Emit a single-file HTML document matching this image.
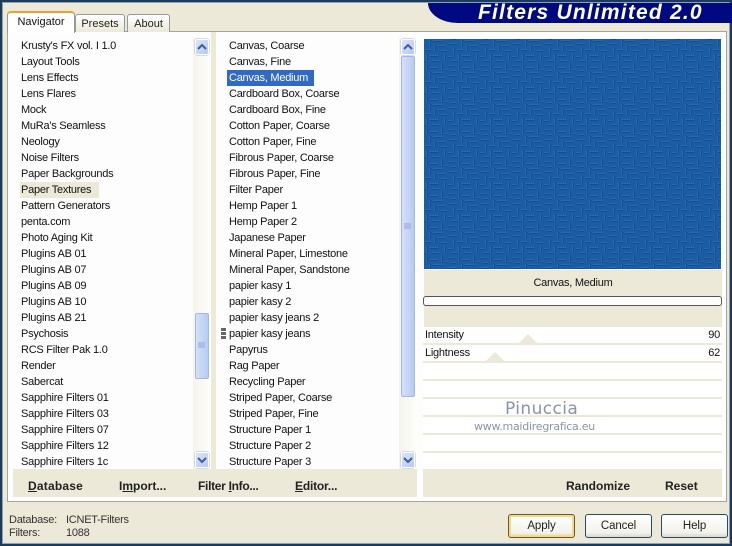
<!DOCTYPE html>
<html><head><meta charset="utf-8"><style>
html,body{margin:0;padding:0;background:#ece9d8}
#w{position:relative;width:732px;height:546px;overflow:hidden;background:#ece9d8;font:11px "Liberation Sans",sans-serif;color:#000}
#w div{position:absolute;box-sizing:border-box}
.r{height:16px;line-height:16px;white-space:nowrap;letter-spacing:-.25px;font-size:11px;color:#111}
.b{font:bold 12px/16px "Liberation Sans",sans-serif;white-space:nowrap;height:16px;color:#222}
.row{left:423px;width:299px;height:16px;background:#fff}
.sep{left:423px;width:299px;height:2px;background:#ece9d8}
.btn{height:24px;width:67px;border:1px solid #2a4a68;border-radius:3px;background:linear-gradient(#fff,#f3f2ea 80%,#dcd8c8);text-align:center;line-height:22px;color:#222;font-size:11.5px;letter-spacing:-.1px}
.sb{width:18px;background:linear-gradient(90deg,#f4f3ec,#fefefb)}
.arr{width:14px;height:16px;background:linear-gradient(135deg,#dbe5f8,#b5c9ef);border:1px solid #fff;border-radius:2px;box-shadow:0 0 0 .5px #a8bce0}
.th{width:14px;background:linear-gradient(90deg,#d5e0f8,#b7cbf2);border:1px solid #a4b8e0;border-radius:2px}
.tab{background:linear-gradient(#fff,#ece9d8);border:1px solid #919b9c;border-bottom:0;border-radius:3px 3px 0 0;text-align:center;color:#222}
.tri{width:0;height:0;border-left:9px solid transparent;border-right:9px solid transparent;border-bottom:9px solid #ece9d8}
</style></head><body><div id="w">
<div style="left:0;top:0;width:732px;height:546px;border:2px solid #1c3a5c;outline:1px solid #8fa0b0;outline-offset:-3px"></div>

<div style="left:428px;top:3px;width:304px;height:20px;background:#000a80;border-radius:0 0 0 30px/0 0 0 20px"></div>
<div style="left:478px;top:2px;height:22px;color:#fff;font:italic bold 21px/22px 'Liberation Sans',sans-serif;letter-spacing:1.2px;white-space:nowrap">Filters Unlimited 2.0</div>

<div style="left:7px;top:31px;width:720px;height:471px;background:#fdfdfd;border:1px solid #a5a59a"></div>

<div class="tab" style="left:75px;top:14px;width:50px;height:18px;line-height:18px">Presets</div>
<div class="tab" style="left:127px;top:14px;width:43px;height:18px;line-height:18px">About</div>
<div style="left:7px;top:11px;width:68px;height:22px;background:#fff;border:1px solid #919b9c;border-bottom:0;border-top:2px solid #e8a030;border-radius:4px 4px 0 0;text-align:center;line-height:19px;color:#111">Navigator</div>

<div style="left:211px;top:32px;width:5px;height:437px;background:#ece9d8"></div>
<div style="left:417px;top:32px;width:6px;height:437px;background:#fdfdfb"></div>

<!-- left list -->
<div class="r" style="left:21px;top:38px">Krusty's FX vol. I 1.0</div>
<div class="r" style="left:21px;top:54px">Layout Tools</div>
<div class="r" style="left:21px;top:70px">Lens Effects</div>
<div class="r" style="left:21px;top:86px">Lens Flares</div>
<div class="r" style="left:21px;top:102px">Mock</div>
<div class="r" style="left:21px;top:118px">MuRa's Seamless</div>
<div class="r" style="left:21px;top:134px">Neology</div>
<div class="r" style="left:21px;top:150px">Noise Filters</div>
<div class="r" style="left:21px;top:166px">Paper Backgrounds</div>
<div style="left:20px;top:182px;width:79px;height:16px;background:#ece9d8"></div>
<div class="r" style="left:21px;top:182px">Paper Textures</div>
<div class="r" style="left:21px;top:198px">Pattern Generators</div>
<div class="r" style="left:21px;top:214px">penta.com</div>
<div class="r" style="left:21px;top:230px">Photo Aging Kit</div>
<div class="r" style="left:21px;top:246px">Plugins AB 01</div>
<div class="r" style="left:21px;top:262px">Plugins AB 07</div>
<div class="r" style="left:21px;top:278px">Plugins AB 09</div>
<div class="r" style="left:21px;top:294px">Plugins AB 10</div>
<div class="r" style="left:21px;top:310px">Plugins AB 21</div>
<div class="r" style="left:21px;top:326px">Psychosis</div>
<div class="r" style="left:21px;top:342px">RCS Filter Pak 1.0</div>
<div class="r" style="left:21px;top:358px">Render</div>
<div class="r" style="left:21px;top:374px">Sabercat</div>
<div class="r" style="left:21px;top:390px">Sapphire Filters 01</div>
<div class="r" style="left:21px;top:406px">Sapphire Filters 03</div>
<div class="r" style="left:21px;top:422px">Sapphire Filters 07</div>
<div class="r" style="left:21px;top:438px">Sapphire Filters 12</div>
<div class="r" style="left:21px;top:454px">Sapphire Filters 1c</div>

<div class="sb" style="left:193px;top:38px;height:431px"></div>
<div class="arr" style="left:195px;top:39px"></div>
<div class="arr" style="left:195px;top:452px"></div>
<div class="th" style="left:195px;top:313px;height:66px"></div>

<!-- middle list -->
<div style="left:227px;top:70px;width:87px;height:16px;background:#316ac5"></div>
<div class="r" style="left:229px;top:38px">Canvas, Coarse</div>
<div class="r" style="left:229px;top:54px">Canvas, Fine</div>
<div class="r" style="left:229px;top:70px;color:#fff">Canvas, Medium</div>
<div class="r" style="left:229px;top:86px">Cardboard Box, Coarse</div>
<div class="r" style="left:229px;top:102px">Cardboard Box, Fine</div>
<div class="r" style="left:229px;top:118px">Cotton Paper, Coarse</div>
<div class="r" style="left:229px;top:134px">Cotton Paper, Fine</div>
<div class="r" style="left:229px;top:150px">Fibrous Paper, Coarse</div>
<div class="r" style="left:229px;top:166px">Fibrous Paper, Fine</div>
<div class="r" style="left:229px;top:182px">Filter Paper</div>
<div class="r" style="left:229px;top:198px">Hemp Paper 1</div>
<div class="r" style="left:229px;top:214px">Hemp Paper 2</div>
<div class="r" style="left:229px;top:230px">Japanese Paper</div>
<div class="r" style="left:229px;top:246px">Mineral Paper, Limestone</div>
<div class="r" style="left:229px;top:262px">Mineral Paper, Sandstone</div>
<div class="r" style="left:229px;top:278px">papier kasy 1</div>
<div class="r" style="left:229px;top:294px">papier kasy 2</div>
<div class="r" style="left:229px;top:310px">papier kasy jeans 2</div>
<div class="r" style="left:229px;top:326px">papier kasy jeans</div>
<div class="r" style="left:229px;top:342px">Papyrus</div>
<div class="r" style="left:229px;top:358px">Rag Paper</div>
<div class="r" style="left:229px;top:374px">Recycling Paper</div>
<div class="r" style="left:229px;top:390px">Striped Paper, Coarse</div>
<div class="r" style="left:229px;top:406px">Striped Paper, Fine</div>
<div class="r" style="left:229px;top:422px">Structure Paper 1</div>
<div class="r" style="left:229px;top:438px">Structure Paper 2</div>
<div class="r" style="left:229px;top:454px">Structure Paper 3</div>
<div style="left:221px;top:328px;width:5px;height:11px;background:repeating-linear-gradient(#666 0,#666 3px,#fff 3px,#fff 4px)"></div>

<div class="sb" style="left:399px;top:38px;height:431px"></div>
<div class="arr" style="left:401px;top:39px"></div>
<div class="arr" style="left:401px;top:452px"></div>
<div class="th" style="left:401px;top:56px;height:341px"></div>

<svg style="position:absolute;left:0;top:0" width="732" height="546">
<g fill="none" stroke="#3f5f98" stroke-width="2">
<path d="M198 49l4-4 4 4M404 49l4-4 4 4M198 458l4 4 4-4M404 458l4 4 4-4"/></g>
<g stroke="#8ea6d8" stroke-width="1"><path d="M198 343h7M198 345h7M198 347h7M404 224h7M404 226h7M404 228h7"/></g>
<defs><pattern id="t" width="32" height="32" patternUnits="userSpaceOnUse">
<rect width="32" height="32" fill="#1b5ca2"/>
<g fill="#2a6bb0"><rect x="0" y="1" width="7" height="1"/><rect x="10" y="1" width="1" height="5"/><rect x="14" y="3" width="8" height="1"/><rect x="25" y="0" width="1" height="6"/><rect x="3" y="6" width="5" height="1"/><rect x="13" y="8" width="1" height="6"/><rect x="17" y="8" width="9" height="1"/><rect x="29" y="5" width="3" height="1"/><rect x="1" y="11" width="8" height="1"/><rect x="18" y="13" width="1" height="6"/><rect x="22" y="13" width="8" height="1"/><rect x="5" y="16" width="1" height="6"/><rect x="9" y="17" width="6" height="1"/><rect x="25" y="18" width="6" height="1"/><rect x="0" y="24" width="4" height="1"/><rect x="10" y="22" width="1" height="7"/><rect x="14" y="23" width="8" height="1"/><rect x="28" y="22" width="1" height="6"/><rect x="4" y="28" width="5" height="1"/><rect x="15" y="28" width="9" height="1"/></g>
<g fill="#124d8f"><rect x="0" y="2" width="7" height="1"/><rect x="11" y="1" width="1" height="5"/><rect x="14" y="4" width="8" height="1"/><rect x="26" y="0" width="1" height="6"/><rect x="3" y="7" width="5" height="1"/><rect x="14" y="8" width="1" height="6"/><rect x="17" y="9" width="9" height="1"/><rect x="29" y="6" width="3" height="1"/><rect x="1" y="12" width="8" height="1"/><rect x="19" y="13" width="1" height="6"/><rect x="22" y="14" width="8" height="1"/><rect x="6" y="16" width="1" height="6"/><rect x="9" y="18" width="6" height="1"/><rect x="25" y="19" width="6" height="1"/><rect x="0" y="25" width="4" height="1"/><rect x="11" y="22" width="1" height="7"/><rect x="14" y="24" width="8" height="1"/><rect x="29" y="22" width="1" height="6"/><rect x="4" y="29" width="5" height="1"/><rect x="15" y="29" width="9" height="1"/></g>
</pattern></defs>
<rect x="424" y="39" width="297" height="230" fill="url(#t)"/>
</svg>

<!-- right panel -->
<div style="left:424px;top:270px;width:298px;height:57px;background:#ece9d8"></div>
<div class="r" style="left:424px;top:275px;width:298px;text-align:center">Canvas, Medium</div>
<div style="left:423px;top:296px;width:299px;height:10px;background:#fff;border:1px solid #555;border-radius:3px"></div>

<div class="row" style="top:327px"></div><div class="sep" style="top:343px"></div>
<div class="row" style="top:345px"></div><div class="sep" style="top:361px"></div>
<div class="row" style="top:363px"></div><div class="sep" style="top:379px"></div>
<div class="row" style="top:381px"></div><div class="sep" style="top:397px"></div>
<div class="row" style="top:399px"></div><div class="sep" style="top:415px"></div>
<div class="row" style="top:417px"></div><div class="sep" style="top:433px"></div>
<div class="row" style="top:435px"></div><div class="sep" style="top:451px"></div>
<div class="row" style="top:453px"></div>
<div class="tri" style="left:519px;top:334px"></div>
<div class="tri" style="left:486px;top:352px"></div>
<div class="r" style="left:425px;top:327px">Intensity</div>
<div class="r" style="left:425px;top:345px">Lightness</div>
<div class="r" style="left:690px;top:327px;width:30px;text-align:right">90</div>
<div class="r" style="left:690px;top:345px;width:30px;text-align:right">62</div>
<div style="left:505px;top:398px;font:17px/22px 'DejaVu Sans',sans-serif;color:#8a93a8;white-space:nowrap;letter-spacing:.4px">Pinuccia</div>
<div style="left:474px;top:420px;font:11px/14px 'DejaVu Sans',sans-serif;color:#8a93a8;white-space:nowrap;letter-spacing:-.25px">www.maidiregrafica.eu</div>

<!-- toolbars -->
<div style="left:13px;top:469px;width:404px;height:28px;background:#ece9d8"></div>
<div style="left:423px;top:469px;width:299px;height:28px;background:#ece9d8"></div>
<div class="b" style="left:28px;top:478px;letter-spacing:.2px"><u>D</u>atabase</div>
<div class="b" style="left:119px;top:478px">I<u>m</u>port...</div>
<div class="b" style="left:198px;top:478px;letter-spacing:-.3px">Filter <u>I</u>nfo...</div>
<div class="b" style="left:295px;top:478px;letter-spacing:-.2px"><u>E</u>ditor...</div>
<div class="b" style="left:566px;top:478px">Randomize</div>
<div class="b" style="left:665px;top:478px">Reset</div>

<!-- footer -->
<div class="r" style="left:9px;top:512px;color:#333">Database:</div>
<div class="r" style="left:66px;top:512px;color:#333">ICNET-Filters</div>
<div class="r" style="left:9px;top:525px;color:#333">Filters:</div>
<div class="r" style="left:66px;top:525px;color:#333">1088</div>
<div class="btn" style="left:508px;top:514px;border-color:#6a5a2a;box-shadow:inset 0 0 0 2px #f5d88a">Apply</div>
<div class="btn" style="left:585px;top:514px">Cancel</div>
<div class="btn" style="left:661px;top:514px">Help</div>
</div></body></html>
